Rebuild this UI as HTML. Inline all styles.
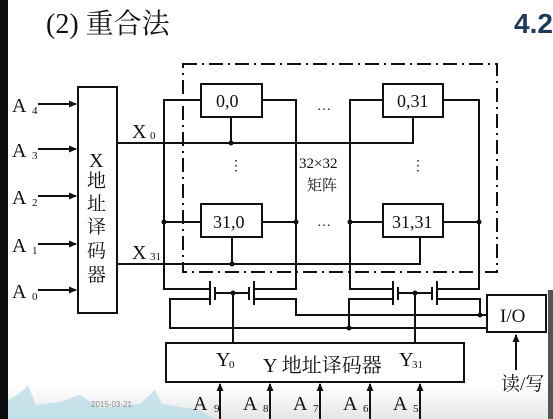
<!DOCTYPE html>
<html><head><meta charset="utf-8"><style>
html,body{margin:0;padding:0;width:553px;height:419px;overflow:hidden;background:#fff}
svg{display:block}
.s{font-family:"Liberation Serif","Noto Serif CJK SC",serif;fill:#111}
.c{font-family:"Liberation Serif","Noto Serif CJK SC",serif;fill:#111}
</style></head><body>
<svg width="553" height="419" viewBox="0 0 553 419" xmlns="http://www.w3.org/2000/svg">
<defs>
<linearGradient id="g" x1="0" y1="0" x2="0" y2="1"><stop offset="0" stop-color="#fff"/><stop offset="1" stop-color="#e4e6e8"/></linearGradient>
<marker id="ar" markerWidth="8" markerHeight="8" refX="7" refY="4" orient="auto" markerUnits="userSpaceOnUse"><path d="M0,0.5 L8,4 L0,7.5 z" fill="#111"/></marker>
</defs>
<rect x="0" y="385" width="553" height="34" fill="url(#g)"/>
<path d="M8,419 L8,400 Q20,395 28,385 Q32,395 36,405 L60,402 L80,395 L100,408 L140,404 L155,390 L162,404 L200,410 L215,419 Z" fill="#bcdde8" opacity="0.8"/>
<rect x="0" y="0" width="8" height="419" fill="#0c0c0c"/>
<rect x="548" y="290" width="5" height="129" fill="#555"/>
<text x="46" y="33" class="c" font-size="28">(2) 重合法</text>
<text x="514" y="33" font-family="Liberation Sans,sans-serif" font-weight="bold" font-size="28" fill="#1d3a5c">4.2</text>
<rect x="183" y="64" width="314" height="208" fill="none" stroke="#111" stroke-width="2" stroke-dasharray="14,5,2,5"/>
<g stroke="#111" stroke-width="2" fill="none">
<rect x="78" y="87" width="39" height="226"/>
<line x1="38" y1="104" x2="76" y2="104" marker-end="url(#ar)"/>
<line x1="38" y1="149" x2="76" y2="149" marker-end="url(#ar)"/>
<line x1="38" y1="196" x2="76" y2="196" marker-end="url(#ar)"/>
<line x1="38" y1="244" x2="76" y2="244" marker-end="url(#ar)"/>
<line x1="38" y1="290" x2="76" y2="290" marker-end="url(#ar)"/>
<polyline points="117,143 413,143 413,117"/>
<polyline points="117,264 420,264 420,237"/>
<line x1="231" y1="117" x2="231" y2="143"/>
<line x1="232" y1="237" x2="232" y2="264"/>
<rect x="201" y="84" width="61" height="33" fill="#fff"/>
<rect x="383" y="84" width="60" height="33" fill="#fff"/>
<rect x="201" y="204" width="61" height="33" fill="#fff"/>
<rect x="383" y="204" width="60" height="33" fill="#fff"/>
<polyline points="201,100 164,100 164,289 210,289"/>
<polyline points="262,100 296,100 296,289 254,289"/>
<polyline points="383,100 350,100 350,289 393,289"/>
<polyline points="443,100 479,100 479,289 437,289"/>
<line x1="164" y1="222" x2="201" y2="222"/>
<line x1="262" y1="222" x2="296" y2="222"/>
<line x1="350" y1="222" x2="383" y2="222"/>
<line x1="443" y1="222" x2="479" y2="222"/>
<line x1="210" y1="281" x2="210" y2="305"/>
<line x1="215" y1="287" x2="215" y2="300"/>
<line x1="249" y1="287" x2="249" y2="300"/>
<line x1="254" y1="281" x2="254" y2="305"/>
<line x1="215" y1="293" x2="249" y2="293"/>
<line x1="233" y1="293" x2="233" y2="343"/>
<polyline points="210,299 170,299 170,328 487,328"/>
<polyline points="254,299 296,299 296,315 487,315"/>
<line x1="393" y1="281" x2="393" y2="305"/>
<line x1="398" y1="287" x2="398" y2="300"/>
<line x1="432" y1="287" x2="432" y2="300"/>
<line x1="437" y1="281" x2="437" y2="305"/>
<line x1="398" y1="293" x2="432" y2="293"/>
<line x1="415" y1="293" x2="415" y2="343"/>
<polyline points="393,299 349,299 349,328"/>
<polyline points="437,299 480,299 480,315"/>
<rect x="487" y="295" width="59" height="37" fill="#fff"/>
<line x1="516" y1="370" x2="516" y2="335" marker-end="url(#ar)"/>
<rect x="166" y="343" width="298" height="39"/>
<line x1="220" y1="419" x2="220" y2="384" marker-end="url(#ar)"/>
<line x1="270" y1="419" x2="270" y2="384" marker-end="url(#ar)"/>
<line x1="320" y1="419" x2="320" y2="384" marker-end="url(#ar)"/>
<line x1="370" y1="419" x2="370" y2="384" marker-end="url(#ar)"/>
<line x1="420" y1="419" x2="420" y2="384" marker-end="url(#ar)"/>
</g>
<g fill="#111">
<circle cx="231" cy="143" r="2.5"/><circle cx="232" cy="264" r="2.5"/>
<circle cx="164" cy="222" r="2.5"/><circle cx="296" cy="222" r="2.5"/>
<circle cx="350" cy="222" r="2.5"/><circle cx="479" cy="222" r="2.5"/>
<circle cx="233" cy="293" r="2.5"/><circle cx="415" cy="293" r="2.5"/>
<circle cx="349" cy="328" r="2.5"/><circle cx="480" cy="315" r="2.5"/>
</g>
<g class="s" font-size="20">
<text x="12" y="112">A</text><text x="32" y="114" font-size="11">4</text>
<text x="12" y="157">A</text><text x="32" y="159" font-size="11">3</text>
<text x="12" y="204">A</text><text x="32" y="206" font-size="11">2</text>
<text x="12" y="252">A</text><text x="32" y="254" font-size="11">1</text>
<text x="12" y="298">A</text><text x="32" y="300" font-size="11">0</text>
<text x="89" y="167">X</text>
<text x="87" y="187" font-size="19">地</text>
<text x="87" y="210" font-size="19">址</text>
<text x="87" y="233" font-size="19">译</text>
<text x="87" y="257" font-size="19">码</text>
<text x="87" y="281" font-size="19">器</text>
<text x="132" y="138">X</text><text x="150" y="139" font-size="11">0</text>
<text x="132" y="259">X</text><text x="150" y="260" font-size="11">31</text>
<text x="216" y="107" font-size="18">0,0</text>
<text x="397" y="107" font-size="18">0,31</text>
<text x="213" y="228" font-size="18">31,0</text>
<text x="392" y="228" font-size="18">31,31</text>
<text x="317" y="110" font-size="14">…</text>
<text x="317" y="226" font-size="14">…</text>
<text x="299" y="168" font-size="15">32×32</text>
<text x="307" y="190" font-size="15">矩阵</text>
<text x="500" y="322" font-size="19">I/O</text>
<text x="216" y="366">Y</text><text x="229" y="368" font-size="11">0</text>
<text x="263" y="372" font-size="20">Y 地址译码器</text>
<text x="399" y="366">Y</text><text x="412" y="368" font-size="11">31</text>
<text x="501" y="390" font-size="19">读/写</text>
<text x="193" y="410">A</text><text x="214" y="412" font-size="11">9</text>
<text x="243" y="410">A</text><text x="263" y="412" font-size="11">8</text>
<text x="293" y="410">A</text><text x="313" y="412" font-size="11">7</text>
<text x="343" y="410">A</text><text x="363" y="412" font-size="11">6</text>
<text x="393" y="410">A</text><text x="413" y="412" font-size="11">5</text>
</g>
<g fill="#111" font-size="14" font-family="Liberation Serif,serif">
<text x="229" y="170">⋮</text><text x="411" y="170">⋮</text>
</g>
<text x="91" y="407" font-family="Liberation Sans,sans-serif" font-size="8" fill="#888">2015-03-21</text>
</svg>
</body></html>
